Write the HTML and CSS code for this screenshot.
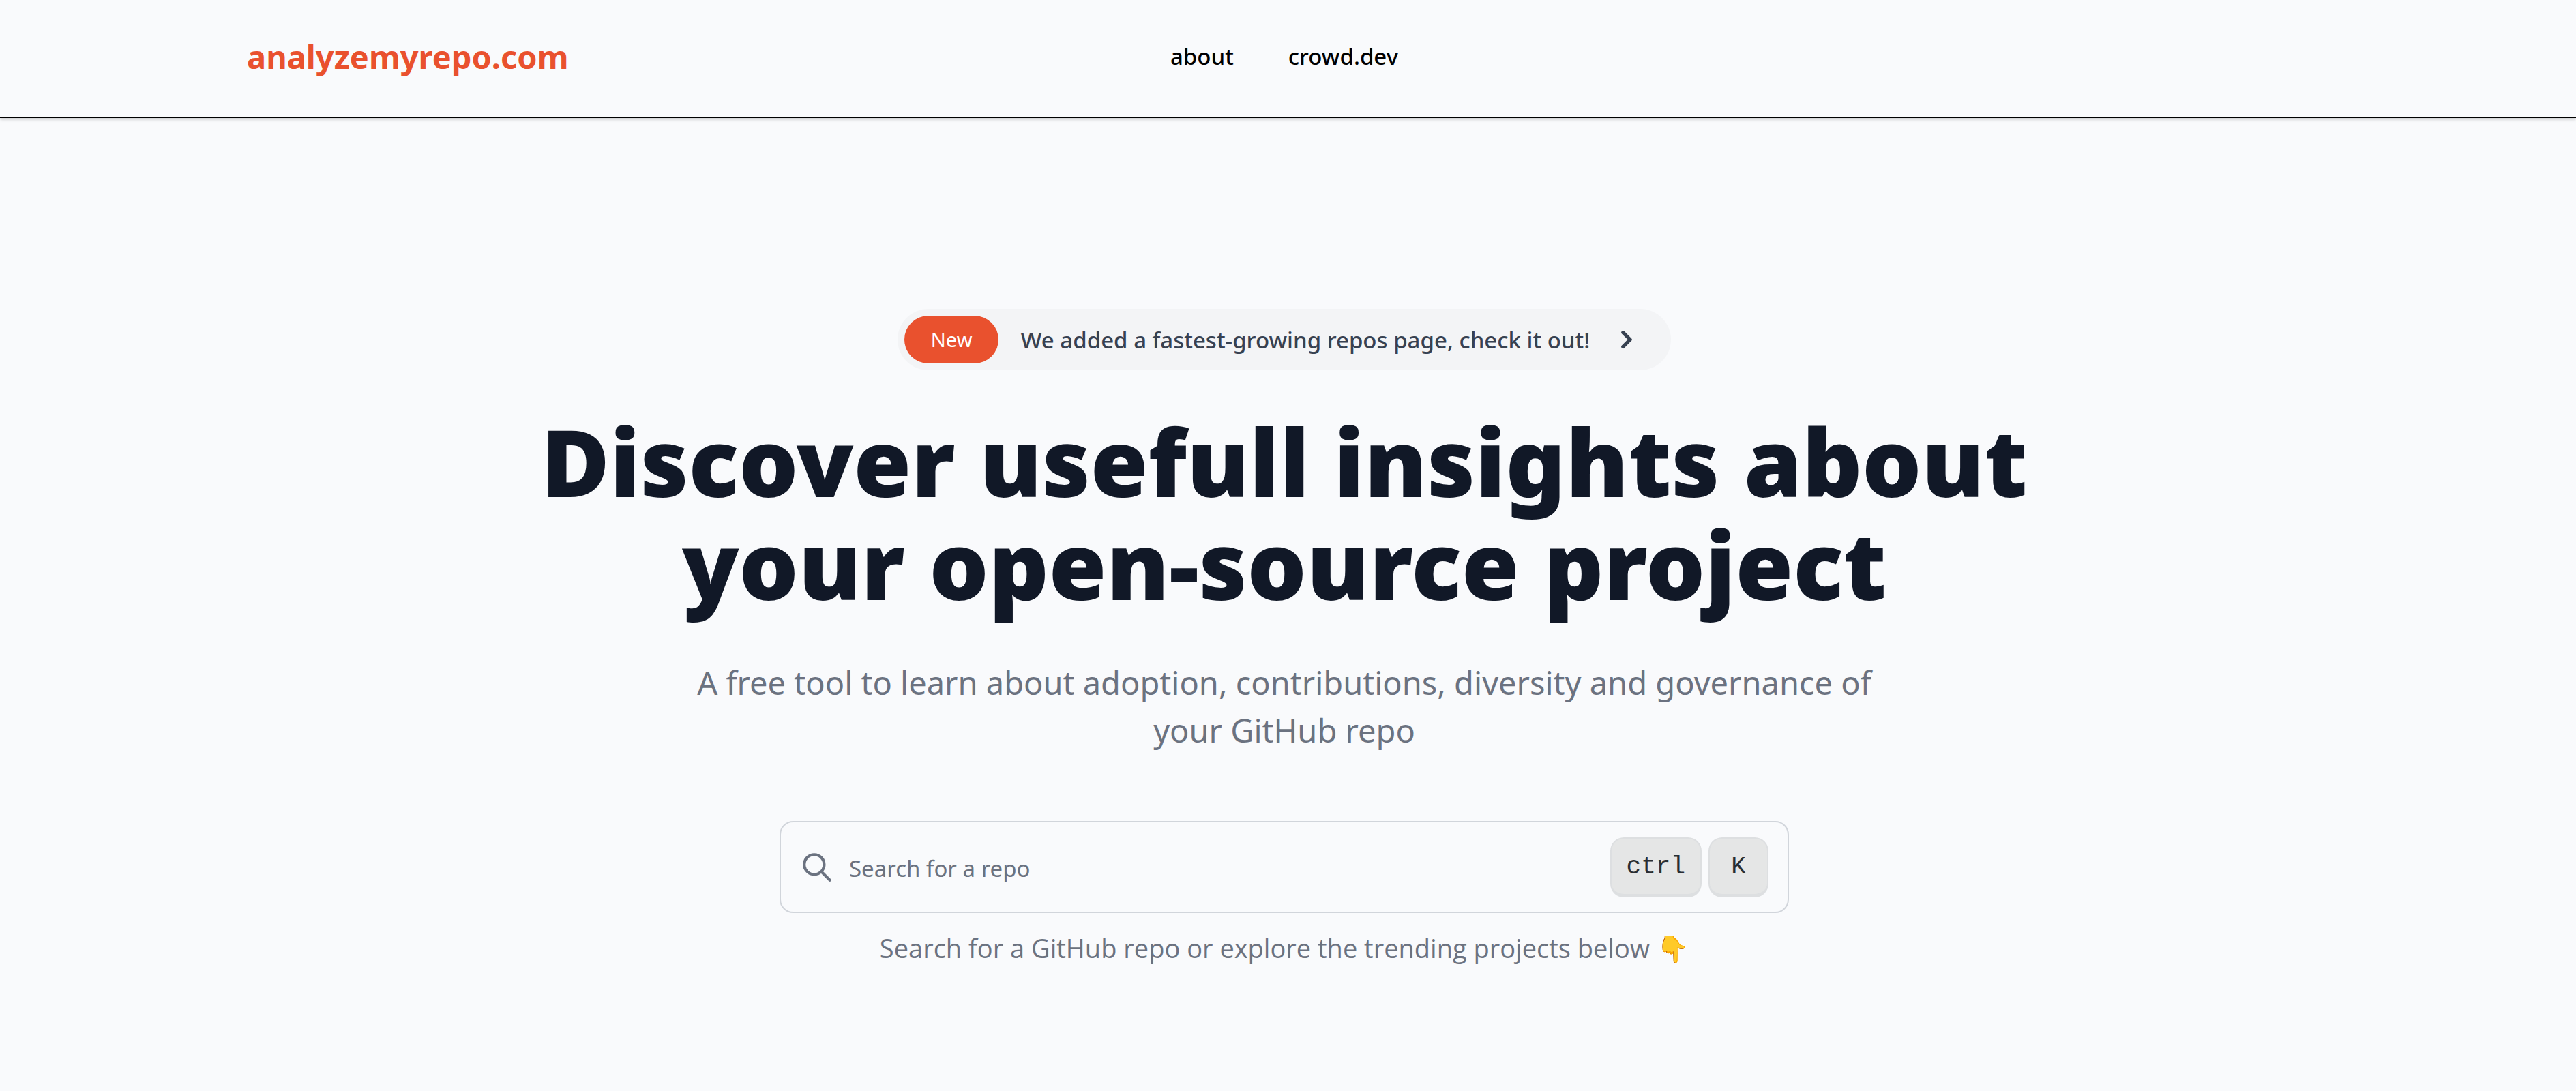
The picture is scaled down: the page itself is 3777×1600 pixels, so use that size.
FILE: index.html
```html
<!DOCTYPE html>
<html lang="en">
<head>
  <meta charset="utf-8">
  <meta name="viewport" content="width=device-width, initial-scale=1">
  <title>analyzemyrepo.com</title>
  <link rel="stylesheet" href="styles.css">
</head>
<body>
  <header class="site-header">
    <a class="logo" href="#">analyzemyrepo.com</a>
    <nav class="site-nav">
      <a href="#">about</a>
      <a href="#">crowd.dev</a>
    </nav>
  </header>

  <main class="hero">
    <a class="announcement" href="#">
      <span class="badge">New</span>
      <span class="announcement-text">We added a fastest-growing repos page, check it out!</span>
      <svg class="chevron" viewBox="0 0 20 20" fill="currentColor" aria-hidden="true">
        <path fill-rule="evenodd" clip-rule="evenodd" d="M7.293 14.707a1 1 0 010-1.414L10.586 10 7.293 6.707a1 1 0 011.414-1.414l4 4a1 1 0 010 1.414l-4 4a1 1 0 01-1.414 0z"/>
      </svg>
    </a>

    <h1 class="title">Discover usefull insights about your open-source project</h1>
    <p class="subtitle">A free tool to learn about adoption, contributions, diversity and governance of your GitHub repo</p>

    <label class="search">
      <svg class="search-icon" viewBox="0 0 24 24" fill="none" stroke="currentColor" stroke-width="2" stroke-linecap="round" stroke-linejoin="round" aria-hidden="true">
        <path d="M21 21l-6-6m2-5a7 7 0 11-14 0 7 7 0 0114 0z"/>
      </svg>
      <input class="search-input" type="text" placeholder="Search for a repo" aria-label="Search for a repo">
      <span class="keys"><kbd>ctrl</kbd><kbd>K</kbd></span>
    </label>
    <p class="caption">Search for a GitHub repo or explore the trending projects below 👇</p>
  </main>
</body>
</html>
```
FILE: styles.css
```css
* {
  box-sizing: border-box;
}

body {
  margin: 0;
  min-height: 100vh;
  background: #f9fafc;
  color: #111827;
  font-family: "Noto Sans", "Open Sans", sans-serif;
}

a {
  color: inherit;
  text-decoration: none;
}

.site-header {
  display: grid;
  grid-template-columns: 1fr auto 1fr;
  align-items: center;
  min-height: 173px;
  padding: 0 373px 6px 362px;
  border-bottom: 2px solid #000;
  box-shadow: 0 2px 6px rgba(0, 0, 0, 0.1), 0 2px 4px rgba(0, 0, 0, 0.1);
}

.logo {
  color: #e9512e;
  font-size: 47px;
  font-weight: 700;
}

.site-nav {
  display: flex;
  gap: 80px;
  color: #000;
  font-size: 33px;
  font-weight: 500;
}

.hero {
  display: flex;
  flex-direction: column;
  align-items: center;
  padding: 280px 11px 120px 0;
  text-align: center;
}

.announcement {
  display: flex;
  align-items: center;
  padding: 10px 39px 10px 10px;
  border-radius: 45px;
  background: #f3f4f6;
  color: #374151;
}

.badge {
  padding: 0 39px;
  border-radius: 35px;
  background: #e9512e;
  color: #fff;
  font-size: 29px;
  line-height: 70px;
}

.announcement-text {
  margin: 0 28px 0 32px;
  font-size: 33px;
  font-weight: 500;
}

.chevron {
  width: 52px;
  height: 52px;
}

.title {
  max-width: 2300px;
  margin: 58px 0 0;
  font-size: 137px;
  font-weight: 900;
  line-height: 151px;
}

.subtitle {
  max-width: 1800px;
  margin: 63px 0 0;
  color: #6b7280;
  font-size: 47px;
  line-height: 70px;
}

.search {
  display: flex;
  align-items: center;
  width: 100%;
  max-width: 1480px;
  min-height: 135px;
  margin-top: 98px;
  padding: 0 28px;
  border: 2px solid #d1d5db;
  border-radius: 20px;
}

.search-icon {
  flex: none;
  width: 50px;
  height: 50px;
  color: #6b7280;
}

.search-input {
  flex: 1;
  min-width: 0;
  margin-left: 22px;
  padding: 4px 0 0;
  border: 0;
  outline: 0;
  background: transparent;
  color: #111827;
  font: inherit;
  font-size: 33px;
}

.search-input::placeholder {
  color: #6b7280;
  opacity: 1;
}

.keys {
  display: flex;
  gap: 10px;
}

kbd {
  min-width: 88px;
  height: 88px;
  padding: 3px 22px 0;
  border: 2px solid #dddfe1;
  border-bottom-width: 5px;
  border-radius: 20px;
  background: #e5e6e6;
  color: #2a2e33;
  font: 36px/78px "Liberation Mono", monospace;
}

.caption {
  margin: 23px 0 0;
  color: #6b7280;
  font-family: "Open Sans", "Noto Sans", sans-serif;
  font-size: 38px;
  line-height: 56px;
}
```
